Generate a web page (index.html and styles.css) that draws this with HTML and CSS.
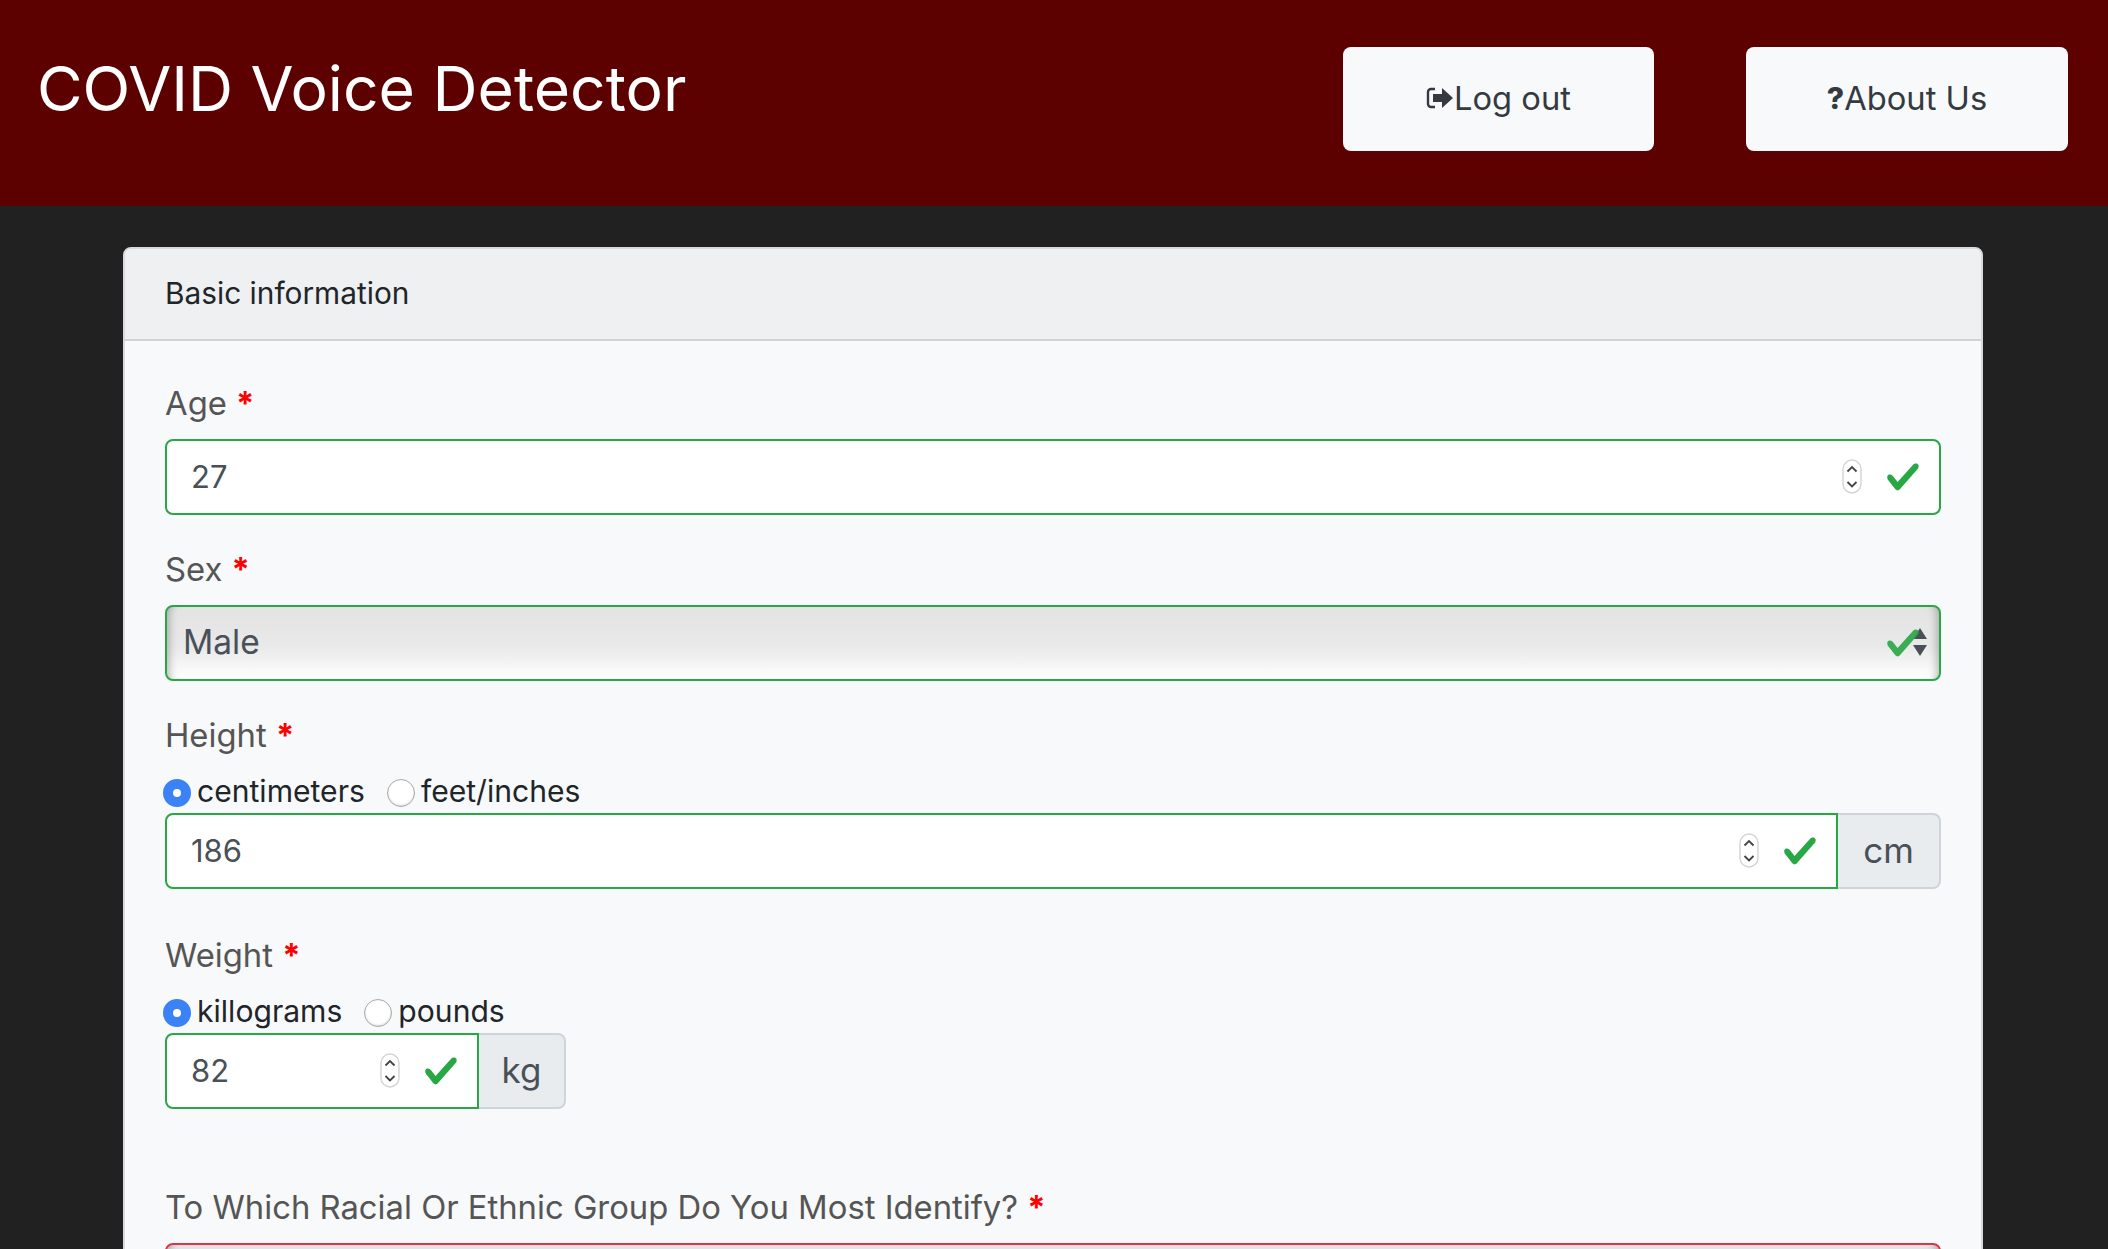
FILE: index.html
```html
<!DOCTYPE html>
<html lang="en">
<head>
<meta charset="utf-8">
<title>COVID Voice Detector</title>
<link rel="stylesheet" href="styles.css">
</head>
<body>
<svg class="defs" width="0" height="0" aria-hidden="true">
  <symbol id="check" viewBox="0 0 8 8"><path fill="#28a745" d="M2.3 6.73L.6 4.53c-.4-1.04.46-1.4 1.1-.8l1.1 1.4 3.4-3.8c.6-.63 1.6-.27 1.2.7l-4 4.6c-.43.5-.8.4-1.1.1z"/></symbol>
  <symbol id="spin" viewBox="0 0 20 36"><rect x="1" y="1" width="18" height="33" rx="9" fill="#fff" stroke="#d4d4d4" stroke-width="1.4"/><path d="M5.5 12.5 10 8l4.500 4.500M5.500 23 10 27.500 14.500 23" fill="none" stroke="#444" stroke-width="1.800"/></symbol>
</svg>
<header class="topbar">
  <h1 class="brand">COVID Voice Detector</h1>
  <nav class="actions">
    <a class="btn btn-logout" href="#"><svg class="icon-logout" viewBox="0 0 28 22" aria-hidden="true"><path d="M9 2H5a3 3 0 0 0-3 3v12a3 3 0 0 0 3 3h4" fill="none" stroke="#343a40" stroke-width="2.400"/><path d="M7 7h9V1l11 10-11 10v-6H7z" fill="#343a40"/></svg>Log out</a>
    <a class="btn btn-about" href="#"><span class="q">?</span>About Us</a>
  </nav>
</header>
<main class="card">
  <div class="card-head">Basic information</div>
  <form class="card-body">
    <div class="group">
      <label class="lbl">Age <b class="req">*</b></label>
      <div class="field ok"><input class="val" value="27"><svg class="spin"><use href="#spin"/></svg><svg class="chk"><use href="#check"/></svg></div>
    </div>
    <div class="group">
      <label class="lbl">Sex <b class="req">*</b></label>
      <div class="field ok sel"><span class="val">Male</span><svg class="arrows" viewBox="0 0 14 28" aria-hidden="true"><path d="M7 0l7 11H0zM0 17h14L7 28z" fill="#4a4f57"/></svg><svg class="chk over"><use href="#check"/></svg></div>
    </div>
    <div class="group group-units">
      <label class="lbl">Height <b class="req">*</b></label>
      <div class="radios">
        <label class="radio"><input type="radio" name="h" checked>centimeters</label>
        <label class="radio"><input type="radio" name="h">feet/inches</label>
      </div>
      <div class="igroup">
        <div class="field ok joined"><input class="val" value="186"><svg class="spin"><use href="#spin"/></svg><svg class="chk"><use href="#check"/></svg></div>
        <span class="unit">cm</span>
      </div>
    </div>
    <div class="group group-weight">
      <label class="lbl">Weight <b class="req">*</b></label>
      <div class="radios">
        <label class="radio"><input type="radio" name="w" checked>killograms</label>
        <label class="radio"><input type="radio" name="w">pounds</label>
      </div>
      <div class="igroup igroup-small">
        <div class="field ok joined"><input class="val" value="82"><svg class="spin"><use href="#spin"/></svg><svg class="chk"><use href="#check"/></svg></div>
        <span class="unit">kg</span>
      </div>
    </div>
    <div class="group">
      <label class="lbl">To Which Racial Or Ethnic Group Do You Most Identify? <b class="req">*</b></label>
      <div class="field bad sel"><span class="val">&nbsp;</span></div>
    </div>
  </form>
</main>
</body>
</html>
```
FILE: styles.css
```css
* { box-sizing: border-box; }
html, body { margin: 0; height: 100%; overflow: hidden; }
body { background: #212121; font-family: Inter, "Noto Sans", sans-serif; color: #212529; }
.defs { position: absolute; }

.topbar { height: 206px; background: #5c0000; display: flex; justify-content: space-between; padding: 47px 40px 0 37px; }
.brand { margin: 0; color: #fff; font-size: 62.400px; font-weight: 400; line-height: 84px; }
.actions { display: flex; gap: 92px; height: 104px; }
.btn { display: flex; align-items: center; justify-content: center; height: 104px; padding-bottom: 3px; background: #f8f9fa; color: #343a40; border-radius: 8px; font-size: 32.700px; text-decoration: none; }
.btn-logout { width: 311px; }
.btn-about { width: 322px; }
.icon-logout { width: 28px; height: 22px; }
.q { font-weight: 800; font-size: 30px; }

.card { margin: 41px 125px 0 123px; background: #f8f9fa; border: 2px solid #d8d9da; border-radius: 8px; }
.card-head { height: 92px; padding: 0 40px 2px; display: flex; align-items: center; background: #eff0f2; border-bottom: 2px solid #d2d3d5; font-size: 29.800px; border-radius: 6px 6px 0 0; }
.card-body { padding: 37px 40px 0; }

.group { margin-bottom: 29px; }
.group-units { margin-bottom: 41px; }
.group-weight { margin-bottom: 73px; }
.lbl { display: block; height: 48px; line-height: 51px; margin-bottom: 13px; font-size: 32.800px; color: #555; }
.req { color: #f00; font-weight: 700; }

.radios { display: flex; gap: 22px; height: 40px; margin-bottom: 2px; margin-left: -2px; align-items: center; }
.radio { display: flex; align-items: center; gap: 6px; font-size: 30.100px; color: #212529; }
.radio input { appearance: none; margin: 4px 0 0; width: 28px; height: 28px; border-radius: 50%; background: #fff; border: 1px solid #a8a8a8; box-shadow: inset 0 -1px 2px rgba(0,0,0,.15); }
.radio input:checked { border: 10px solid #3b82f6; box-shadow: none; }

.field { display: flex; align-items: center; height: 76px; padding: 0 18px 0 24px; background: #fff; border: 2px solid #28a745; border-radius: 8px; position: relative; }
.val { flex: 1; width: 0; min-width: 0; border: 0; padding: 0 0 1px; background: transparent; font: inherit; font-size: 31px; color: #495057; outline: 0; }
.spin { width: 20px; height: 36px; margin-right: 23px; }
.chk { width: 36px; height: 36px; }
.sel { padding: 0 18px 2px 16px; background: linear-gradient(#e3e3e3, #e9e9e9 55%, #fff); box-shadow: inset 10px 0 8px -8px rgba(0,0,0,.28), inset -10px 0 8px -8px rgba(0,0,0,.28); }
.sel .val { font-size: 33.500px; }
.chk.over { position: absolute; right: 18px; top: 18px; opacity: .9; }
.arrows { position: absolute; right: 12px; top: 21px; width: 14px; height: 28px; }
.bad { border-color: #dc3545; }

.igroup { display: flex; }
.igroup .field { flex: 1; min-width: 0; }
.joined { border-radius: 8px 0 0 8px; }
.unit { flex: none; display: flex; align-items: center; justify-content: center; width: 103px; height: 76px; padding-bottom: 2px; background: #e9ecef; border: 2px solid #ced4da; border-left: 0; border-radius: 0 8px 8px 0; font-size: 35px; color: #495057; }
.igroup-small { width: 401px; }
.igroup-small .unit { width: 87px; }
```
